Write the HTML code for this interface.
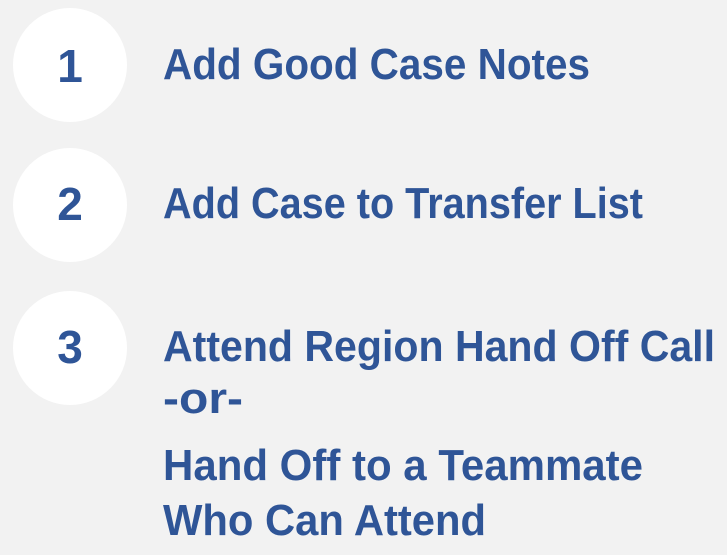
<!DOCTYPE html>
<html><head><meta charset="utf-8"><style>
html,body{margin:0;padding:0;background:#f2f2f2;}
svg{display:block;}
text{font-family:"Liberation Sans",Arial,sans-serif;font-weight:bold;fill:#2f5597;}
</style></head><body>
<svg width="727" height="555" viewBox="0 0 727 555" xmlns="http://www.w3.org/2000/svg">
<rect width="727" height="555" fill="#f2f2f2"/>
<circle cx="70" cy="65" r="57" fill="#ffffff"/>
<circle cx="70" cy="205" r="57" fill="#ffffff"/>
<circle cx="70" cy="348" r="57" fill="#ffffff"/>
<text x="70" y="82" font-size="46" text-anchor="middle">1</text>
<text x="70" y="220" font-size="46" text-anchor="middle">2</text>
<text x="70" y="363" font-size="46" text-anchor="middle">3</text>
<text x="163" y="79" font-size="44" textLength="427" lengthAdjust="spacingAndGlyphs">Add Good Case Notes</text>
<text x="163" y="218" font-size="44" textLength="480" lengthAdjust="spacingAndGlyphs">Add Case to Transfer List</text>
<text x="163" y="361" font-size="44" textLength="552" lengthAdjust="spacingAndGlyphs">Attend Region Hand Off Call</text>
<text x="163" y="413" font-size="44" textLength="80" lengthAdjust="spacingAndGlyphs">-or-</text>
<text x="163" y="480" font-size="44" textLength="480" lengthAdjust="spacingAndGlyphs">Hand Off to a Teammate</text>
<text x="163" y="535" font-size="44" textLength="323" lengthAdjust="spacingAndGlyphs">Who Can Attend</text>
</svg>
</body></html>
